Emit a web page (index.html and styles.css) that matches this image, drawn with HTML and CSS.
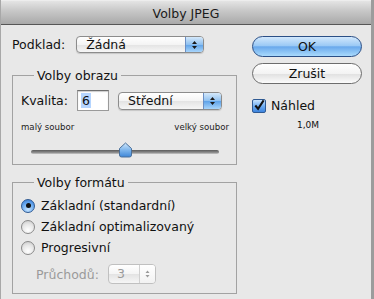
FILE: index.html
```html
<!DOCTYPE html>
<html lang="cs">

<head>
  <meta charset="UTF-8">
  <title>Volby JPEG</title>
  <link rel="stylesheet" href="styles.css">
</head>

<body>
  <div class="window">
    <div class="titlebar">Volby JPEG</div>

    <div class="content">
      <div class="left">
        <!-- Podklad -->
        <div class="row podklad">
          <span class="label">Podklad:</span>
          <div class="popup popup-wide">
            <span class="popup-text">Žádná</span>
            <span class="popup-arrows">
              <svg width="7" height="10" viewBox="0 0 7 10"><path d="M3.5 1 L6 4 H1 Z M3.5 9 L6 6 H1 Z" fill="#1a1a1a"/></svg>
            </span>
          </div>
        </div>

        <!-- Volby obrazu -->
        <fieldset class="group image-group">
          <legend>Volby obrazu</legend>
          <div class="row quality">
            <span class="label">Kvalita:</span>
            <div class="field"><span class="selected">6</span></div>
            <div class="popup popup-quality">
              <span class="popup-text">Střední</span>
              <span class="popup-arrows">
                <svg width="7" height="10" viewBox="0 0 7 10"><path d="M3.5 1 L6 4 H1 Z M3.5 9 L6 6 H1 Z" fill="#1a1a1a"/></svg>
              </span>
            </div>
          </div>
          <div class="scale">
            <span>malý soubor</span>
            <span>velký soubor</span>
          </div>
          <div class="slider">
            <div class="track"></div>
            <svg class="thumb" width="15" height="16" viewBox="0 0 15 16">
              <defs>
                <linearGradient id="thumbFill" x1="0" y1="0" x2="0" y2="1">
                  <stop offset="0" stop-color="#cfe6fb"/>
                  <stop offset="0.5" stop-color="#7fb6ec"/>
                  <stop offset="1" stop-color="#3d86d8"/>
                </linearGradient>
              </defs>
              <path d="M7.5 1 L13.5 6.5 V13 Q13.5 15 11.5 15 H3.5 Q1.5 15 1.5 13 V6.5 Z" fill="url(#thumbFill)" stroke="#4a6f99" stroke-width="1"/>
            </svg>
          </div>
        </fieldset>

        <!-- Volby formátu -->
        <fieldset class="group format-group">
          <legend>Volby formátu</legend>
          <div class="radio-row">
            <span class="radio radio-on"><span class="dot"></span></span>
            <span>Základní (standardní)</span>
          </div>
          <div class="radio-row">
            <span class="radio"></span>
            <span>Základní optimalizovaný</span>
          </div>
          <div class="radio-row">
            <span class="radio"></span>
            <span>Progresivní</span>
          </div>
          <div class="row passes">
            <span class="label disabled">Průchodů:</span>
            <div class="popup popup-passes">
              <span class="popup-text">3</span>
              <span class="popup-arrows">
                <svg width="7" height="10" viewBox="0 0 7 10"><path d="M3.5 1.5 L5.5 4 H1.5 Z M3.5 8.5 L5.5 6 H1.5 Z" fill="#9a9a9a"/></svg>
              </span>
            </div>
          </div>
        </fieldset>
      </div>

      <div class="right">
        <button class="button button-default">OK</button>
        <button class="button">Zrušit</button>
        <div class="check-row">
          <span class="checkbox">
            <svg width="13" height="13" viewBox="0 0 13 13"><path d="M2.5 6.5 L5.5 10 L11.5 1" fill="none" stroke="#111" stroke-width="2.2"/></svg>
          </span>
          <span>Náhled</span>
        </div>
        <div class="size">1,0M</div>
      </div>
    </div>
  </div>
</body>

</html>
```

FILE: styles.css
```css
body {
  margin: 0;
  padding: 0;
  background-color: #e8e8e8;
  font-family: "DejaVu Sans", sans-serif;
  font-size: 12.5px;
  color: #111;
}

.window {
  width: 374px;
  height: 299px;
  box-sizing: border-box;
  border-left: 1px solid #a8a8a8;
  border-right: 3px solid #9c9c9c;
  background-color: #e8e8e8;
  overflow: hidden;
}

.titlebar {
  height: 25px;
  box-sizing: border-box;
  line-height: 25px;
  text-align: center;
  color: #1a1a1a;
  background: linear-gradient(#e4e4e4, #c9c9c9 40%, #a9a9a9);
  border-top: 1px solid #ededed;
  border-bottom: 1px solid #565656;
}

.content {
  display: flex;
  padding-top: 11px;
}

.left {
  width: 225px;
  margin-left: 11px;
}

.right {
  width: 110px;
  margin-left: 15px;
  display: flex;
  flex-direction: column;
}

.row {
  display: flex;
  align-items: center;
}

.label.disabled {
  color: #9a9a9a;
}

/* popup buttons */
.popup {
  display: flex;
  align-items: stretch;
  box-sizing: border-box;
  height: 17px;
  border: 1px solid #8c8c8c;
  border-radius: 4px;
  background: linear-gradient(#ffffff, #f4f4f4 50%, #e3e3e3 51%, #f6f6f6);
  box-shadow: 0 1px 1px rgba(0, 0, 0, 0.15);
  overflow: hidden;
}

.popup-text {
  flex: 1;
  padding-left: 9px;
  line-height: 15px;
}

.popup-arrows {
  width: 17px;
  display: flex;
  align-items: center;
  justify-content: center;
  border-left: 1px solid #6b8fc4;
  background: linear-gradient(#d5e9fb, #8ec0f0 50%, #5ea2e8 51%, #a8d5fb);
}

.popup-wide {
  width: 128px;
  margin-left: 11px;
}

.popup-quality {
  width: 104px;
  height: 18px;
  margin-left: 9px;
}

.popup-quality .popup-text {
  line-height: 16px;
}

.popup-passes {
  width: 48px;
  height: 20px;
  margin-left: 9px;
  border-color: #c0c0c0;
  color: #9a9a9a;
  box-shadow: none;
}

.popup-passes .popup-text {
  line-height: 18px;
  padding-left: 8px;
}

.popup-passes .popup-arrows {
  width: 15px;
  border-left: 1px solid #d0d0d0;
  background: linear-gradient(#ffffff, #f2f2f2);
}

/* group boxes */
.group {
  margin: 0;
  padding: 0 0 0 8px;
  border: 1px solid #a2a2a2;
  width: 225px;
  box-sizing: border-box;
}

.group legend {
  margin-left: 13px;
  padding: 0 3px;
  line-height: 15px;
}

.image-group {
  margin-top: 15px;
  height: 97px;
}

.quality {
  margin-top: 7px;
}

.field {
  width: 32px;
  height: 21px;
  box-sizing: border-box;
  margin-left: 9px;
  background-color: #fff;
  border: 1px solid #9a9a9a;
  border-top-color: #6f6f6f;
  box-shadow: inset 0 1px 1px rgba(0, 0, 0, 0.2);
  padding: 2px 0 0 3px;
  line-height: 15px;
}

.selected {
  background-color: #b5d5ff;
  padding: 0 1px;
}

.scale {
  display: flex;
  justify-content: space-between;
  width: 208px;
  margin-top: 11px;
  font-size: 8.6px;
  color: #222;
}

.slider {
  position: relative;
  width: 188px;
  height: 16px;
  margin: 10px 0 0 10px;
}

.track {
  position: absolute;
  top: 8px;
  left: 0;
  right: 0;
  height: 4px;
  border-radius: 2px;
  background: linear-gradient(#5b5b5b, #8a8a8a 60%, #c9c9c9);
}

.thumb {
  position: absolute;
  top: 0;
  left: 87px;
}

.format-group {
  margin-top: 10px;
  height: 119px;
}

.radio-row {
  display: flex;
  align-items: center;
  height: 21px;
}

.radio-row:first-of-type {
  margin-top: 5px;
}

.radio {
  width: 14px;
  height: 14px;
  box-sizing: border-box;
  border-radius: 50%;
  border: 1px solid #8a8a8a;
  background: radial-gradient(circle at 50% 75%, #ffffff, #e6e6e6 55%, #c4c4c4);
  margin-right: 6px;
  display: flex;
  align-items: center;
  justify-content: center;
}

.radio-on {
  border-color: #2f5a93;
  background: radial-gradient(circle at 50% 80%, #c4e3ff, #6aaaf0 55%, #2f74d0);
}

.dot {
  width: 5px;
  height: 5px;
  border-radius: 50%;
  background-color: #111;
}

.passes {
  margin: 6px 0 0 15px;
}

/* buttons */
.button {
  width: 110px;
  height: 21px;
  border: 1px solid #6d6d6d;
  border-radius: 11px;
  background: linear-gradient(#ffffff, #f3f3f3 50%, #e0e0e0 51%, #fbfbfb);
  font-family: "DejaVu Sans", sans-serif;
  font-size: 12.5px;
  color: #111;
  padding: 0;
  outline: none;
}

.button-default {
  border-color: #2b4f86;
  background: linear-gradient(#d2e8fc, #9ccaf5 45%, #6aa9ec 52%, #a9dafc);
  margin-bottom: 6px;
}

.check-row {
  display: flex;
  align-items: center;
  margin-top: 14px;
}

.checkbox {
  width: 14px;
  height: 14px;
  box-sizing: border-box;
  border: 1px solid #2f5a93;
  border-radius: 2px;
  background: linear-gradient(#c8e4ff, #6aaaf0 55%, #3d84de);
  margin-right: 5px;
  display: flex;
  align-items: center;
  justify-content: center;
}

.size {
  font-size: 9px;
  margin-top: 7px;
  padding-left: 45px;
}
```
